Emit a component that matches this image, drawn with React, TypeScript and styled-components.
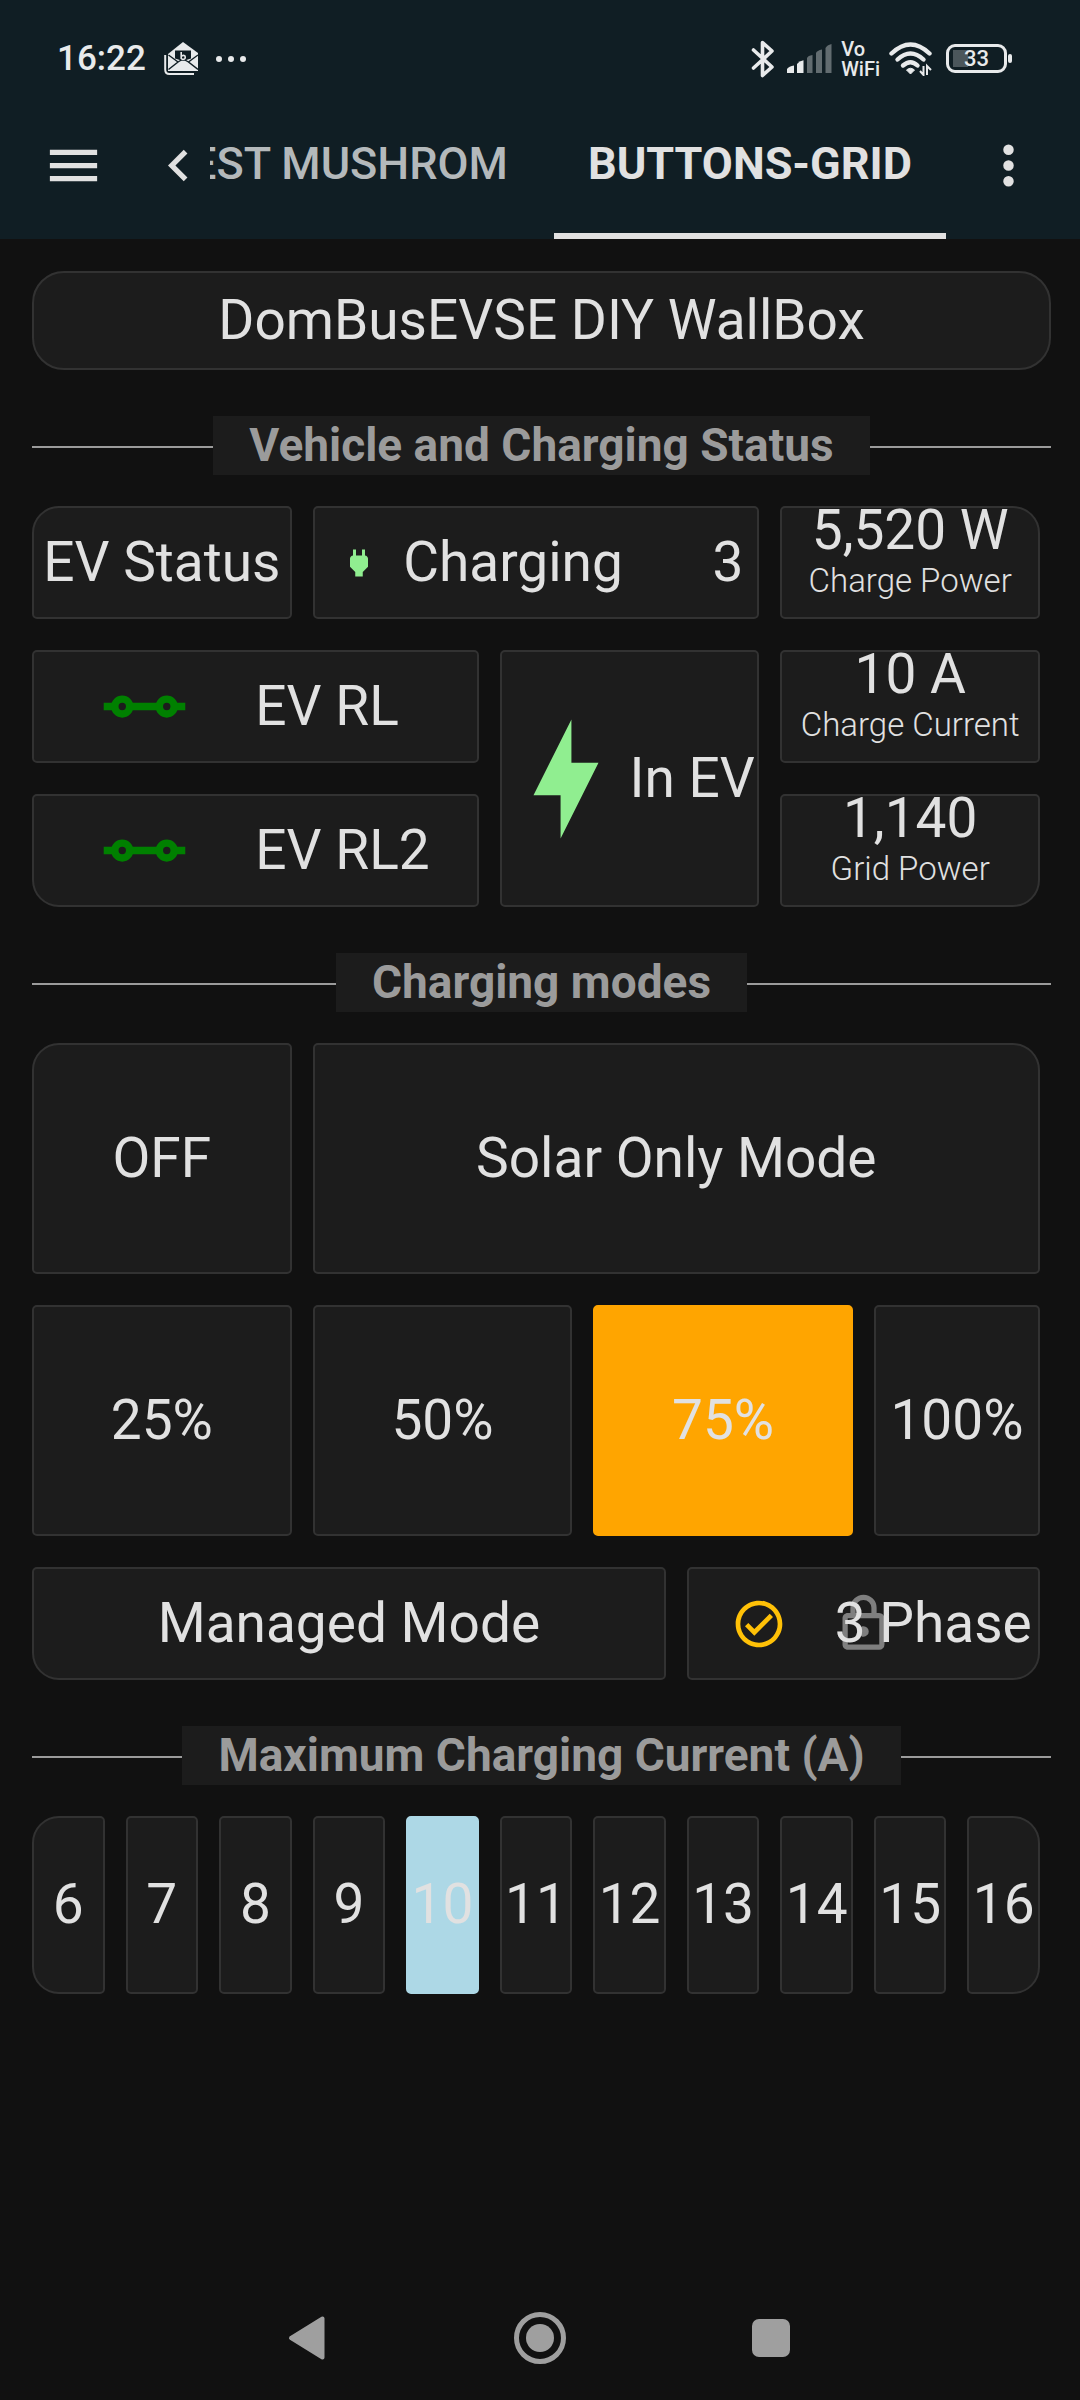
import React, { useState } from "react";
import styled, { createGlobalStyle, css } from "styled-components";

const color = {
  page: "#111111",
  header: "#101e24",
  card: "#1c1c1c",
  border: "#323232",
  text: "#e1e1e1",
  muted: "#9b9b9b",
  system: "#e8eaeb",
  nav: "#9f9f9f",
};

const GlobalStyle = createGlobalStyle`
  *, *::before, *::after { box-sizing: border-box; }
  body {
    margin: 0;
    background: ${color.page};
    color: ${color.text};
    font-family: Roboto, "Noto Sans", sans-serif;
  }
  button {
    margin: 0;
    padding: 0;
    border: 0;
    background: none;
    color: inherit;
    font: inherit;
    cursor: pointer;
  }
  svg { display: block; flex: none; }
`;

const Screen = styled.div`
  display: flex;
  flex-direction: column;
  min-height: 100vh;
`;

const Header = styled.header`
  background: ${color.header};
`;

/* ---------- system status bar ---------- */

const StatusBar = styled.div`
  display: flex;
  align-items: center;
  justify-content: space-between;
  height: 91px;
  padding: 26px 68px 0 57px;
  color: ${color.system};
`;

const StatusLeft = styled.div`
  display: flex;
  align-items: center;
  gap: 18px;
`;

const StatusRight = styled.div`
  display: flex;
  align-items: center;
  gap: 9px;
`;

const Clock = styled.time`
  font-size: 35px;
  line-height: 40px;
  font-weight: 500;
`;

const VoWifi = styled.span`
  font-size: 20px;
  line-height: 20px;
  font-weight: 500;
`;

const Battery = styled.span`
  display: flex;
  align-items: center;
  margin-left: 5px;
`;

const BatteryBody = styled.span`
  display: flex;
  align-items: center;
  justify-content: center;
  width: 61px;
  height: 29px;
  border: 3px solid ${color.system};
  border-radius: 9px;
  background: linear-gradient(#4b565b, #4b565b) 4px 50% / 15px 17px no-repeat;
  font-size: 22px;
  line-height: 22px;
  font-weight: 500;
`;

const BatteryTip = styled.span`
  width: 4px;
  height: 9px;
  margin-left: 1px;
  border-radius: 2px;
  background: ${color.system};
`;

/* ---------- toolbar with tabs ---------- */

const Toolbar = styled.div`
  display: flex;
  align-items: center;
  height: 148px;
  padding: 0 40px 0 42px;
`;

const IconButton = styled.button<{ $after?: number }>`
  flex: none;
  margin-right: ${(p) => p.$after ?? 0}px;
`;

const Tabs = styled.div`
  display: flex;
  flex: 1;
  justify-content: flex-end;
  align-self: stretch;
  gap: 12px;
  min-width: 0;
  margin-right: 31px;
  overflow: hidden;
`;

const Tab = styled.button<{ $active?: boolean }>`
  flex: none;
  padding: 3px 34px 0;
  border-bottom: 6px solid ${(p) => (p.$active ? color.text : "transparent")};
  color: ${(p) => (p.$active ? color.text : "#b4b9bb")};
  font-size: 45px;
  line-height: 54px;
  font-weight: ${(p) => (p.$active ? 700 : 500)};
  white-space: nowrap;
`;

/* ---------- dashboard ---------- */

const Main = styled.main`
  flex: 1;
  padding: 32px 29px 32px 32px;
`;

const TitleCard = styled.h1`
  display: flex;
  align-items: center;
  justify-content: center;
  height: 99px;
  margin: 0;
  padding-bottom: 2px;
  border: 2px solid ${color.border};
  border-radius: 32px;
  background: ${color.card};
  font-size: 55px;
  line-height: 66px;
  font-weight: 400;
`;

const Divider = styled.div`
  display: flex;
  align-items: center;
  margin: 46px 0 31px;

  &::before,
  &::after {
    content: "";
    flex: 1;
    height: 2px;
    margin-top: 3px;
    background: ${color.muted};
  }
`;

const DividerTitle = styled.h2`
  margin: 0;
  padding: 0 36px 1px;
  background: ${color.card};
  color: ${color.muted};
  font-size: 46px;
  line-height: 58px;
  font-weight: 700;
  white-space: nowrap;
`;

const Grid = styled.div<{ $rows: string }>`
  display: grid;
  grid-template-columns: repeat(11, minmax(0, 1fr));
  grid-template-rows: ${(p) => p.$rows};
  gap: 31px 21px;
  padding-right: 11px;
`;

type Corner = "tl" | "tr" | "br" | "bl";
const cornerOrder: Corner[] = ["tl", "tr", "br", "bl"];

const tile = css<{ $cols?: number; $rows?: number; $round?: Corner[]; $fill?: string }>`
  grid-column: span ${(p) => p.$cols ?? 1};
  grid-row: span ${(p) => p.$rows ?? 1};
  display: flex;
  align-items: center;
  border: 2px solid ${(p) => p.$fill ?? color.border};
  border-radius: ${(p) =>
    cornerOrder.map((c) => (p.$round?.includes(c) ? "27px" : "5px")).join(" ")};
  background: ${(p) => p.$fill ?? color.card};
  font-size: 55px;
  line-height: 66px;
  white-space: nowrap;
`;

const Tile = styled.button`
  ${tile}
  position: relative;
  justify-content: center;
`;

const Reading = styled.button`
  ${tile}
  flex-direction: column;
`;

const ReadingValue = styled.span`
  line-height: 44px;
`;

const ReadingName = styled.span`
  font-size: 33px;
  line-height: 58px;
  font-weight: 300;
`;

const TileIcon = styled.span<{ $share: number; $color: string }>`
  display: flex;
  flex: none;
  justify-content: center;
  width: ${(p) => p.$share}%;
  color: ${(p) => p.$color};
`;

const TileText = styled.span<{ $grow?: "start" | "center" }>`
  position: relative;
  padding-bottom: 2px;
  ${(p) => p.$grow && `flex: 1; text-align: ${p.$grow};`}
`;

const TileState = styled.span`
  padding: 0 14px 2px 0;
`;

const LockOverlay = styled.span`
  position: absolute;
  inset: 0;
  display: flex;
  align-items: center;
  justify-content: center;
  color: #7f7f7f;
`;

/* ---------- system navigation ---------- */

const NavBar = styled.nav`
  display: flex;
  align-items: center;
  justify-content: center;
  gap: 171px;
  height: 124px;
  color: ${color.nav};
`;

/* ---------- icons ---------- */

const paths = {
  menu: "M3,6H21V8H3V6M3,11H21V13H3V11M3,16H21V18H3V16Z",
  chevronLeft: "M15.41,16.58L10.83,12L15.41,7.41L14,6L8,12L14,18L15.41,16.58Z",
  dots: "M12,16A2,2 0 0,1 14,18A2,2 0 0,1 12,20A2,2 0 0,1 10,18A2,2 0 0,1 12,16M12,10A2,2 0 0,1 14,12A2,2 0 0,1 12,14A2,2 0 0,1 10,12A2,2 0 0,1 12,10M12,4A2,2 0 0,1 14,6A2,2 0 0,1 12,8A2,2 0 0,1 10,6A2,2 0 0,1 12,4Z",
  plug: "M16,7V3H14V7H10V3H8V7C7,7 6,8 6,9V14.5L9.5,18V21H14.5V18L18,14.5V9C18,8 17,7 16,7Z",
  flash: "M11 15H6L13 1V9H18L11 23V15Z",
  check: "M12 2C6.5 2 2 6.5 2 12S6.5 22 12 22 22 17.5 22 12 17.5 2 12 2M12 20C7.59 20 4 16.41 4 12S7.59 4 12 4 20 7.59 20 12 16.41 20 12 20M16.59 7.58L10 14.17L7.41 11.59L6 13L10 17L18 9L16.59 7.58Z",
  lock: "M12,17C10.89,17 10,16.1 10,15C10,13.89 10.89,13 12,13A2,2 0 0,1 14,15A2,2 0 0,1 12,17M18,20V10H6V20H18M18,8A2,2 0 0,1 20,10V20A2,2 0 0,1 18,22H6C4.89,22 4,21.1 4,20V10C4,8.89 4.89,8 6,8H7V6A5,5 0 0,1 12,1A5,5 0 0,1 17,6V8H18M12,3A3,3 0 0,0 9,6V8H15V6A3,3 0 0,0 12,3Z",
};

function Icon({ name, size }: { name: keyof typeof paths; size: number }) {
  return (
    <svg width={size} height={size} viewBox="0 0 24 24" fill="currentColor" aria-hidden="true">
      <path d={paths[name]} />
    </svg>
  );
}

const SwitchClosedIcon = () => (
  <svg width="89" height="89" viewBox="0 0 24 24" fill="none" stroke="currentColor" strokeWidth="2" aria-hidden="true">
    <path d="M1 12H4M8 12H16M20 12H23" />
    <circle cx="6" cy="12" r="2" />
    <circle cx="18" cy="12" r="2" />
  </svg>
);

const MailIcon = () => (
  <svg width="34" height="34" viewBox="0 0 34 34" aria-hidden="true">
    <path d="M1.2 13V27.5Q1.2 32 5.5 32H30" fill="none" stroke="currentColor" strokeWidth="2" />
    <path d="M4 12L19 0L34 11V29H4Z" fill="currentColor" />
    <path d="M11 8.5H27V16.5L19 19L11 16.5Z" fill={color.header} />
    <path d="M4.5 13L14 20L4.5 27.5M34 13L24.5 20L34 27.5M14 20L19 17L24.5 20" fill="none" stroke={color.header} strokeWidth="1.4" />
    <path d="M17.2 10V17M17.2 14.5Q19 12.4 21 14Q22 17.6 18.8 17.4L17.2 16.6" fill="none" stroke="currentColor" strokeWidth="1.6" />
  </svg>
);

const MoreDots = () => (
  <svg width="30" height="6" viewBox="0 0 30 6" fill="currentColor" aria-hidden="true">
    <circle cx="3" cy="3" r="3" />
    <circle cx="15" cy="3" r="3" />
    <circle cx="27" cy="3" r="3" />
  </svg>
);

const BluetoothIcon = () => (
  <svg width="27" height="38" viewBox="0 0 27 38" fill="none" stroke="currentColor" strokeWidth="3.6" strokeLinejoin="round" strokeLinecap="round" aria-hidden="true">
    <path d="M2.5 10L21 27L11.5 35.5V2.5L21 11L2.5 28" />
  </svg>
);

const SignalIcon = () => (
  <svg width="45" height="29" viewBox="0 0 45 29" fill="currentColor" aria-hidden="true">
    <path d="M0 29V25Q2 22 7 21.5V29Z" />
    <path d="M10 29V20Q12 17 16.5 16.2V29Z" />
    <g opacity="0.38">
      <path d="M20 29V14Q21 11.5 25.5 11V29Z" />
      <path d="M29 29V9Q30 6.5 35 5.5V29Z" />
      <path d="M38.5 29V4Q40 1 44.5 0V29Z" />
    </g>
  </svg>
);

const WifiIcon = () => (
  <svg width="43" height="34" viewBox="0 0 43 34" aria-hidden="true">
    <g fill="none" stroke="currentColor" strokeWidth="4.4" strokeLinecap="round">
      <path d="M2.5 11.5Q21.5 -6.5 40.5 11.5" />
      <path d="M8.5 17.5Q21.5 5.5 34.5 17.5" />
      <path d="M14 23.5Q21.5 17 28.5 23.5" />
    </g>
    <path d="M17.5 28Q21.5 24.5 25.5 28L21.5 32Z" fill="currentColor" stroke="currentColor" strokeLinejoin="round" />
    <path d="M34.5 24V33L31 29M38 33V24L42 28" fill="none" stroke="currentColor" strokeWidth="2" />
  </svg>
);

const BackIcon = () => (
  <svg width="60" height="60" viewBox="0 0 60 60" fill="currentColor" stroke="currentColor" strokeWidth="4" strokeLinejoin="round" aria-hidden="true">
    <path d="M12 30L43.5 10.5V49.5Z" />
  </svg>
);

const HomeIcon = () => (
  <svg width="60" height="60" viewBox="0 0 60 60" aria-hidden="true">
    <circle cx="30" cy="30" r="23.5" fill="none" stroke="currentColor" strokeWidth="5" />
    <circle cx="30" cy="30" r="14" fill="currentColor" />
  </svg>
);

const RecentsIcon = () => (
  <svg width="60" height="60" viewBox="0 0 60 60" fill="currentColor" aria-hidden="true">
    <rect x="11" y="11" width="38" height="38" rx="7" />
  </svg>
);

/* ---------- page ---------- */

const Section = ({ children }: { children: string }) => (
  <Divider>
    <DividerTitle>{children}</DividerTitle>
  </Divider>
);

const percentages = [
  { label: "25%", cols: 3 },
  { label: "50%", cols: 3 },
  { label: "75%", cols: 3 },
  { label: "100%", cols: 2 },
];

const currents = [6, 7, 8, 9, 10, 11, 12, 13, 14, 15, 16];

export default function App() {
  const [mode, setMode] = useState("75%");
  const [maxCurrent, setMaxCurrent] = useState(10);
  const modeFill = (name: string) => (mode === name ? "#ffa500" : undefined);

  return (
    <Screen>
      <GlobalStyle />
      <Header>
        <StatusBar>
          <StatusLeft>
            <Clock>16:22</Clock>
            <MailIcon />
            <MoreDots />
          </StatusLeft>
          <StatusRight>
            <BluetoothIcon />
            <SignalIcon />
            <VoWifi>
              Vo
              <br />
              WiFi
            </VoWifi>
            <WifiIcon />
            <Battery>
              <BatteryBody>33</BatteryBody>
              <BatteryTip />
            </Battery>
          </StatusRight>
        </StatusBar>
        <Toolbar>
          <IconButton aria-label="Menu" $after={42}>
            <Icon name="menu" size={63} />
          </IconButton>
          <IconButton aria-label="Scroll tabs left">
            <Icon name="chevronLeft" size={63} />
          </IconButton>
          <Tabs role="tablist">
            <Tab role="tab" aria-selected={false}>TEST MUSHROM</Tab>
            <Tab role="tab" aria-selected $active>BUTTONS-GRID</Tab>
          </Tabs>
          <IconButton aria-label="More options">
            <Icon name="dots" size={63} />
          </IconButton>
        </Toolbar>
      </Header>

      <Main>
        <TitleCard>DomBusEVSE DIY WallBox</TitleCard>

        <Section>Vehicle and Charging Status</Section>
        <Grid $rows="repeat(3, 113px)">
          <Tile $cols={3} $round={["tl"]}>
            <TileText>EV Status</TileText>
          </Tile>
          <Tile $cols={5}>
            <TileIcon $share={20} $color="#90ee90"><Icon name="plug" size={36} /></TileIcon>
            <TileText $grow="start">Charging</TileText>
            <TileState>3</TileState>
          </Tile>
          <Reading $cols={3} $round={["tr"]}>
            <ReadingValue>5,520 W</ReadingValue>
            <ReadingName>Charge Power</ReadingName>
          </Reading>
          <Tile $cols={5}>
            <TileIcon $share={50} $color="#008000"><SwitchClosedIcon /></TileIcon>
            <TileText $grow="start">EV RL</TileText>
          </Tile>
          <Tile $cols={3} $rows={2}>
            <TileIcon $share={50} $color="#90ee90"><Icon name="flash" size={130} /></TileIcon>
            <TileText $grow="start">In EV</TileText>
          </Tile>
          <Reading $cols={3}>
            <ReadingValue>10 A</ReadingValue>
            <ReadingName>Charge Current</ReadingName>
          </Reading>
          <Tile $cols={5} $round={["bl"]}>
            <TileIcon $share={50} $color="#008000"><SwitchClosedIcon /></TileIcon>
            <TileText $grow="start">EV RL2</TileText>
          </Tile>
          <Reading $cols={3} $round={["br"]}>
            <ReadingValue>1,140</ReadingValue>
            <ReadingName>Grid Power</ReadingName>
          </Reading>
        </Grid>

        <Section>Charging modes</Section>
        <Grid $rows="231px 231px 113px">
          <Tile $cols={3} $round={["tl"]} $fill={modeFill("off")} onClick={() => setMode("off")}>
            <TileText>OFF</TileText>
          </Tile>
          <Tile $cols={8} $round={["tr"]} $fill={modeFill("solar")} onClick={() => setMode("solar")}>
            <TileText>Solar Only Mode</TileText>
          </Tile>
          {percentages.map(({ label, cols }) => (
            <Tile key={label} $cols={cols} $fill={modeFill(label)} onClick={() => setMode(label)}>
              <TileText>{label}</TileText>
            </Tile>
          ))}
          <Tile $cols={7} $round={["bl"]} $fill={modeFill("managed")} onClick={() => setMode("managed")}>
            <TileText>Managed Mode</TileText>
          </Tile>
          <Tile $cols={4} $round={["br"]}>
            <LockOverlay><Icon name="lock" size={63} /></LockOverlay>
            <TileIcon $share={40} $color="#ffc107"><Icon name="check" size={56} /></TileIcon>
            <TileText $grow="center">3 Phase</TileText>
          </Tile>
        </Grid>

        <Section>Maximum Charging Current (A)</Section>
        <Grid $rows="178px">
          {currents.map((amps, i) => (
            <Tile
              key={amps}
              $round={i === 0 ? ["tl", "bl"] : i === currents.length - 1 ? ["tr", "br"] : []}
              $fill={maxCurrent === amps ? "#add8e6" : undefined}
              onClick={() => setMaxCurrent(amps)}
            >
              <TileText>{amps}</TileText>
            </Tile>
          ))}
        </Grid>
      </Main>

      <NavBar>
        <IconButton aria-label="Back"><BackIcon /></IconButton>
        <IconButton aria-label="Home"><HomeIcon /></IconButton>
        <IconButton aria-label="Recent apps"><RecentsIcon /></IconButton>
      </NavBar>
    </Screen>
  );
}
